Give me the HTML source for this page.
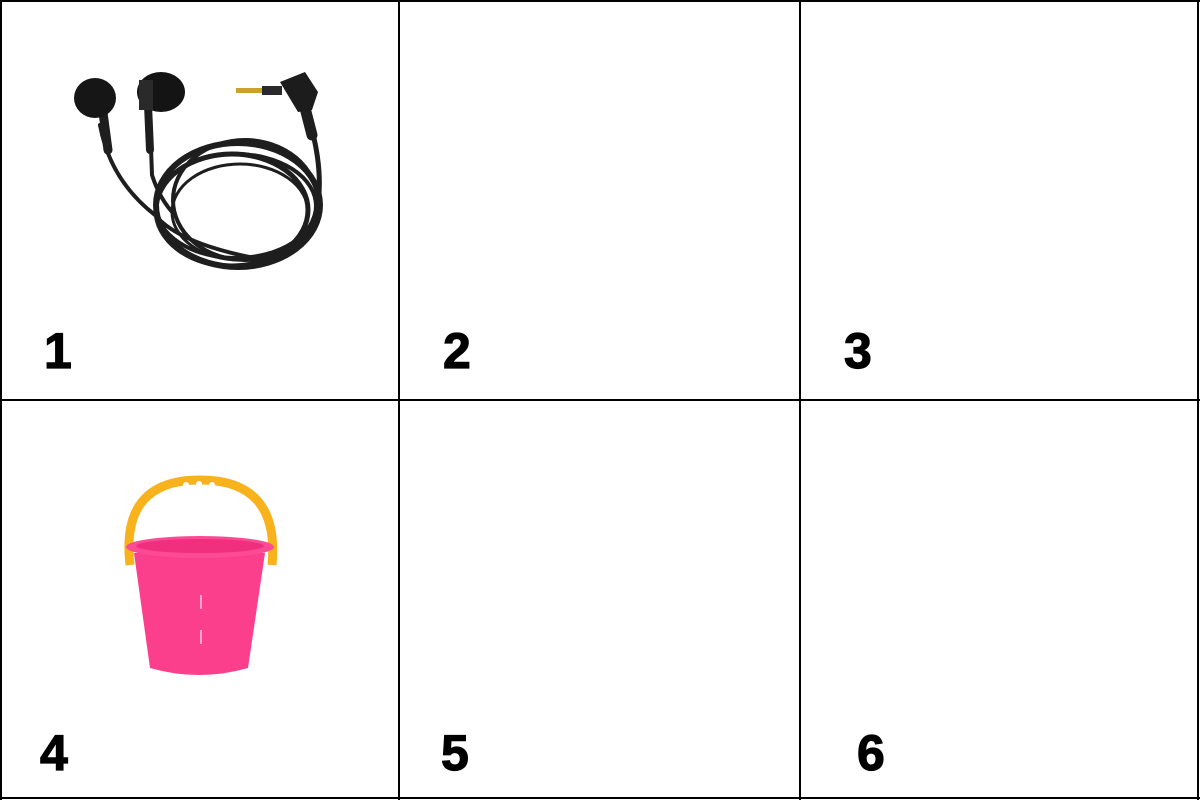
<!DOCTYPE html>
<html><head><meta charset="utf-8"><style>
html,body{margin:0;padding:0;background:#fff;width:1200px;height:800px;overflow:hidden}
svg text{font-family:"Liberation Sans",Arial,sans-serif;font-weight:bold;font-size:50px;fill:#000;stroke:#000;stroke-width:1.2px}
</style></head><body>
<svg width="1200" height="800" viewBox="0 0 1200 800">
<rect x="0" y="0" width="1200" height="800" fill="#fff"/>
<g stroke="#000" stroke-width="2" fill="none">
<line x1="1" y1="0" x2="1" y2="800"/>
<line x1="399" y1="0" x2="399" y2="800"/>
<line x1="800" y1="0" x2="800" y2="800"/>
<line x1="1198" y1="0" x2="1198" y2="800"/>
<line x1="0" y1="1" x2="1200" y2="1"/>
<line x1="0" y1="400" x2="1200" y2="400"/>
<line x1="0" y1="798" x2="1200" y2="798"/>
</g>
<text x="44" y="368">1</text>
<text x="443" y="368">2</text>
<text x="844" y="368">3</text>
<text x="40" y="770">4</text>
<text x="441" y="770">5</text>
<text x="857" y="770">6</text>

<!-- earphones -->
<g fill="none" stroke="#1e1e1e" stroke-linecap="round">
<ellipse cx="238" cy="205" rx="82" ry="62" stroke-width="6"/>
<ellipse cx="232" cy="210" rx="76" ry="56" stroke-width="5"/>
<ellipse cx="245" cy="200" rx="72" ry="60" stroke-width="4"/>
<ellipse cx="236" cy="206" rx="80" ry="52" stroke-width="4"/>
<ellipse cx="240" cy="212" rx="68" ry="48" stroke-width="3"/>
<path d="M100 125 Q110 180 155 215 Q180 245 265 260" stroke-width="4"/>
<path d="M150 120 L152 175 Q160 200 175 215" stroke-width="4"/>
<path d="M312 130 Q325 180 315 220 Q300 255 265 262" stroke-width="5"/>
<path d="M102 105 L108 150" stroke-width="9"/>
<path d="M148 105 L150 150" stroke-width="8"/>
<path d="M303 100 L312 135" stroke-width="11"/>
</g>
<ellipse cx="95" cy="98" rx="21" ry="20" fill="#161616"/>
<ellipse cx="161" cy="92" rx="24" ry="20" fill="#141414"/>
<rect x="139" y="80" width="14" height="30" fill="#2a2a2a"/>
<path d="M280 82 L305 72 L318 92 L312 110 L298 112 Z" fill="#1c1c1c"/>
<rect x="236" y="88" width="26" height="5" fill="#c9a32a"/>
<rect x="262" y="86" width="20" height="9" fill="#2a2a2a"/>

<!-- bucket -->
<path d="M130 565 Q120 480 200 480 Q280 480 272 565" fill="none" stroke="#f7b21c" stroke-width="9"/>
<circle cx="186" cy="485" r="3" fill="#fff"/>
<circle cx="199" cy="484" r="3" fill="#fff"/>
<circle cx="212" cy="485" r="3" fill="#fff"/>
<path d="M134 553 L150 668 Q199 682 248 668 L265 553 Z" fill="#fb3f8c"/>
<ellipse cx="200" cy="547" rx="74" ry="11" fill="#fc4a95"/>
<ellipse cx="200" cy="546" rx="64" ry="7" fill="#f0307e"/>
<rect x="200" y="595" width="2" height="14" fill="#fda6c9"/>
<rect x="200" y="630" width="2" height="14" fill="#fda6c9"/>
</svg>
</body></html>
